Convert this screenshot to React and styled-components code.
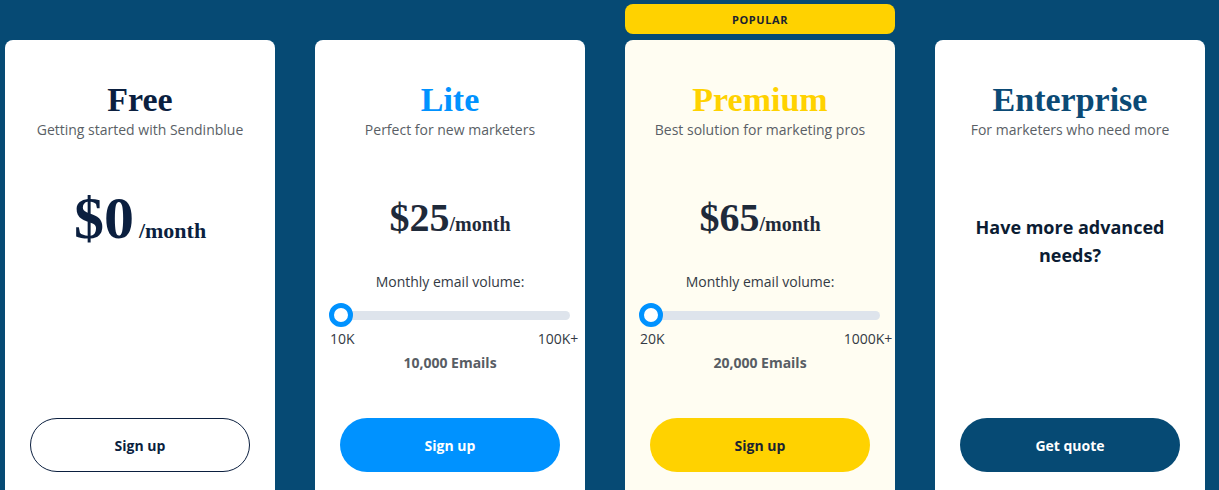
import React from "react";
import styled, { createGlobalStyle } from "styled-components";

const Global = createGlobalStyle`
  html, body { margin: 0; padding: 0; }
  body {
    background: #064a74;
    font-family: "Open Sans", "Liberation Sans", sans-serif;
    overflow: hidden;
  }
`;

const Row = styled.div`
  display: flex;
  gap: 40px;
  padding-left: 5px;
  height: 490px;
  overflow: hidden;
`;

const Column = styled.div`
  width: 270px;
  display: flex;
  flex-direction: column;
  flex-shrink: 0;
  & > * { flex-shrink: 0; }
`;

const Badge = styled.div`
  height: 30px;
  margin: 4px 0 6px;
  background: #ffd200;
  border-radius: 8px;
  display: flex;
  align-items: center;
  justify-content: center;
  font-size: 11px;
  font-weight: 700;
  letter-spacing: 0.6px;
  color: #1b2330;
`;

const Spacer = styled.div`
  height: 40px;
`;

const Card = styled.div`
  background: ${(p) => p.$bg || "#fff"};
  border-radius: 8px;
  height: 480px;
  padding-top: 40px;
  box-sizing: border-box;
  display: flex;
  flex-direction: column;
  align-items: stretch;
  text-align: center;
`;

const Title = styled.div`
  font-family: "Liberation Serif", "Times New Roman", serif;
  font-weight: 700;
  font-size: 34px;
  line-height: 40px;
  color: ${(p) => p.$color};
`;

const Subtitle = styled.div`
  font-size: 14px;
  line-height: 20px;
  color: #5a5f66;
`;

const Body = styled.div`
  flex: 1;
  display: flex;
  flex-direction: column;
`;

const Price = styled.div`
  margin-top: 56px;
  height: 44px;
  display: flex;
  justify-content: center;
  align-items: baseline;
  font-family: "Liberation Serif", "Times New Roman", serif;
  font-weight: 700;
  color: ${(p) => p.$color || "#1f2a3a"};
  line-height: 44px;
`;

const Amount = styled.span`
  font-size: ${(p) => p.$size}px;
`;

const Per = styled.span`
  font-size: ${(p) => p.$size}px;
  margin-left: ${(p) => p.$gap || 0}px;
`;

const VolumeLabel = styled.div`
  margin-top: 32px;
  font-size: 14px;
  line-height: 20px;
  color: #333a44;
`;

const SliderWrap = styled.div`
  padding: 0 15px;
`;

const Track = styled.div`
  margin-top: 11px;
  height: 24px;
  position: relative;
  display: flex;
  align-items: center;
  &::before {
    content: "";
    width: 241px;
    height: 9px;
    border-radius: 5px;
    background: #dee4ec;
  }
`;

const Thumb = styled.span`
  position: absolute;
  left: -1px;
  top: 0;
  width: 24px;
  height: 24px;
  box-sizing: border-box;
  border-radius: 50%;
  border: 5px solid #0092ff;
  background: #fff;
`;

const Ticks = styled.div`
  margin-top: 2px;
  display: flex;
  justify-content: space-between;
  font-size: 14px;
  line-height: 20px;
  color: #333a44;
`;

const TickEnd = styled.span`
  width: 70px;
  margin-right: -23px;
  text-align: center;
`;

const Emails = styled.div`
  margin-top: 4px;
  font-size: 14px;
  line-height: 20px;
  font-weight: 700;
  color: #585d64;
`;

const Needs = styled.div`
  margin: 73px auto 0;
  width: 210px;
  font-size: 18px;
  line-height: 28px;
  font-weight: 700;
  color: #0b1c33;
`;

const Button = styled.button`
  margin: 0 auto 48px;
  width: 220px;
  height: 54px;
  border-radius: 27px;
  box-sizing: border-box;
  border: ${(p) => (p.$outline ? "1px solid #0b1f3f" : "none")};
  background: ${(p) => p.$bg};
  color: ${(p) => p.$fg};
  font-family: "Open Sans", "Liberation Sans", sans-serif;
  font-size: 14px;
  font-weight: 700;
  cursor: pointer;
`;

function Slider({ min, max, emails }) {
  return (
    <>
      <VolumeLabel>Monthly email volume:</VolumeLabel>
      <SliderWrap>
        <Track>
          <Thumb />
        </Track>
        <Ticks>
          <span>{min}</span>
          <TickEnd>{max}</TickEnd>
        </Ticks>
      </SliderWrap>
      <Emails>{emails}</Emails>
    </>
  );
}

export default function App() {
  return (
    <>
      <Global />
      <Row>
        <Column>
          <Spacer />
          <Card>
            <Title $color="#0b1f3f">Free</Title>
            <Subtitle>Getting started with Sendinblue</Subtitle>
            <Body>
              <Price $color="#0b1f3f">
                <Amount $size={60}>$0</Amount>
                <Per $size={22} $gap={5}>/month</Per>
              </Price>
            </Body>
            <Button $outline $bg="#fff" $fg="#0b1f3f">
              Sign up
            </Button>
          </Card>
        </Column>

        <Column>
          <Spacer />
          <Card>
            <Title $color="#0092ff">Lite</Title>
            <Subtitle>Perfect for new marketers</Subtitle>
            <Body>
              <Price>
                <Amount $size={40}>$25</Amount>
                <Per $size={20}>/month</Per>
              </Price>
              <Slider min="10K" max="100K+" emails="10,000 Emails" />
            </Body>
            <Button $bg="#0092ff" $fg="#fff">
              Sign up
            </Button>
          </Card>
        </Column>

        <Column>
          <Badge>POPULAR</Badge>
          <Card $bg="#fffdf2">
            <Title $color="#ffd200">Premium</Title>
            <Subtitle>Best solution for marketing pros</Subtitle>
            <Body>
              <Price>
                <Amount $size={40}>$65</Amount>
                <Per $size={20}>/month</Per>
              </Price>
              <Slider min="20K" max="1000K+" emails="20,000 Emails" />
            </Body>
            <Button $bg="#ffd200" $fg="#1b2330">
              Sign up
            </Button>
          </Card>
        </Column>

        <Column>
          <Spacer />
          <Card>
            <Title $color="#0b4a75">Enterprise</Title>
            <Subtitle>For marketers who need more</Subtitle>
            <Body>
              <Needs>Have more advanced needs?</Needs>
            </Body>
            <Button $bg="#064a74" $fg="#fff">
              Get quote
            </Button>
          </Card>
        </Column>
      </Row>
    </>
  );
}
